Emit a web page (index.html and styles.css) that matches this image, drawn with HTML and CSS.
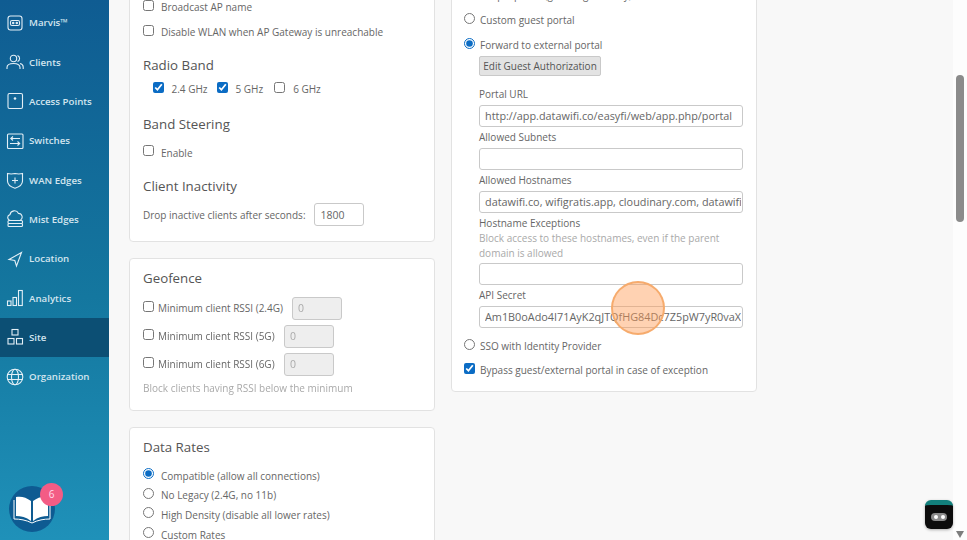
FILE: index.html
```html
<!DOCTYPE html>
<html lang="en">
<head>
<meta charset="utf-8">
<title>WLAN settings</title>
<link rel="stylesheet" href="styles.css">
</head>
<body>
<div class="app">
  <nav class="sidebar">
    <a class="nav-item"><svg class="ico" viewBox="0 0 18 18"><rect x="2" y="2" width="14" height="14" rx="2.5"/><rect x="4.500" y="6.500" width="9" height="5" rx="1.500"/><circle cx="7.200" cy="9" r=".7"/><circle cx="10.800" cy="9" r=".7"/></svg><span>Marvis™</span></a>
    <a class="nav-item"><svg class="ico" viewBox="0 0 18 18"><circle cx="7.500" cy="5.500" r="3.200"/><path d="M1 16v-1.500c0-2.500 2.500-4 6.500-4s6.500 1.500 6.500 4V16"/><path d="M11.500 2.500a3.200 3.200 0 0 1 0 6M14 10.500c2 .5 3.200 1.800 3.200 3.500v2"/></svg><span>Clients</span></a>
    <a class="nav-item"><svg class="ico" viewBox="0 0 18 18"><rect x="2" y="1.500" width="14.500" height="15" rx="1.500"/><circle class="solid" cx="9" cy="6.500" r="1.300"/></svg><span>Access Points</span></a>
    <a class="nav-item"><svg class="ico" viewBox="0 0 18 18"><rect x="1.500" y="2" width="15.500" height="14.500" rx="1"/><path d="M14 6.500H5M7 4.500l-2.200 2 2.200 2M4 11.500h9.500M11.500 9.500l2.200 2-2.200 2"/></svg><span>Switches</span></a>
    <a class="nav-item"><svg class="ico" viewBox="0 0 18 18"><path d="M1.500 2.500c2.500.6 5 .6 7.500 0 2.500.6 5 .6 7.500 0V10c0 3.500-3.500 6-7.500 7.200C5 16 1.500 13.500 1.500 10z"/><path d="M9 6.500v6M6 9.500h6"/></svg><span>WAN Edges</span></a>
    <a class="nav-item"><svg class="ico" viewBox="0 0 18 18"><path d="M4.500 10.500a3 3 0 0 1-.5-5.900 4.500 4.500 0 0 1 8.500-1.200 3.600 3.600 0 0 1 2 6.600"/><rect x="2" y="10.500" width="14.500" height="3" rx="1"/><rect x="2" y="13.500" width="14.500" height="3" rx="1"/></svg><span>Mist Edges</span></a>
    <a class="nav-item"><svg class="ico" viewBox="0 0 18 18"><path d="M15.500 2.500 3 9.500l5.800 1 1.700 5.500z"/></svg><span>Location</span></a>
    <a class="nav-item"><svg class="ico" viewBox="0 0 18 18"><rect x="1.500" y="12" width="3.500" height="4.500"/><rect x="7" y="8.500" width="3.500" height="8"/><rect x="12.500" y="1.500" width="3.800" height="15"/></svg><span>Analytics</span></a>
    <a class="nav-item active"><svg class="ico" viewBox="0 0 18 18"><rect x="6" y="1.500" width="6" height="5.500"/><rect x="2" y="10.500" width="6" height="5.500"/><rect x="10.500" y="10.500" width="6" height="5.500"/></svg><span>Site</span></a>
    <a class="nav-item"><svg class="ico" viewBox="0 0 18 18"><circle cx="9" cy="9" r="7.800"/><ellipse cx="9" cy="9" rx="3.500" ry="7.800"/><path d="M1.500 6.500h15M1.500 11.500h15"/></svg><span>Organization</span></a>
    <div class="book">
      <svg viewBox="0 0 46 46"><circle cx="23" cy="23" r="23" fill="#0e5b92"/><path d="M7 30V11c5-1 10 0 15 4v20c-5-4-10-5-15-5zM39 30V11c-5-1-10 0-15 4v20c5-4 10-5 15-5z" fill="#fff"/><path d="M5 14v19c6 0 12 1 18 4 6-3 12-4 18-4V14" fill="none" stroke="#fff" stroke-width="1"/></svg>
      <b class="badge">6</b>
    </div>
  </nav>

  <main class="content">
    <div class="col col-left">
      <section class="card card-top">
        <label class="row"><input type="checkbox"><span>Broadcast AP name</span></label>
        <label class="row"><input type="checkbox"><span>Disable WLAN when AP Gateway is unreachable</span></label>
        <h3 class="h-radio">Radio Band</h3>
        <div class="bands">
          <label class="band"><input type="checkbox" checked><span>2.4 GHz</span></label>
          <label class="band"><input type="checkbox" checked><span>5 GHz</span></label>
          <label class="band"><input type="checkbox"><span>6 GHz</span></label>
        </div>
        <h3 class="h-steer">Band Steering</h3>
        <label class="row"><input type="checkbox"><span>Enable</span></label>
        <h3 class="h-inact">Client Inactivity</h3>
        <div class="drop"><span>Drop inactive clients after seconds:</span><input class="text num" type="text" value="1800"></div>
      </section>

      <section class="card geo">
        <h3>Geofence</h3>
        <label class="rssi"><input type="checkbox"><span class="w24">Minimum client RSSI (2.4G)</span><input class="text off" type="text" value="0" disabled></label>
        <label class="rssi"><input type="checkbox"><span class="w5">Minimum client RSSI (5G)</span><input class="text off" type="text" value="0" disabled></label>
        <label class="rssi"><input type="checkbox"><span class="w5">Minimum client RSSI (6G)</span><input class="text off" type="text" value="0" disabled></label>
        <p class="help geo-help">Block clients having RSSI below the minimum</p>
      </section>

      <section class="card rates">
        <h3>Data Rates</h3>
        <label class="rate"><input type="radio" name="rate" checked><span>Compatible (allow all connections)</span></label>
        <label class="rate"><input type="radio" name="rate"><span>No Legacy (2.4G, no 11b)</span></label>
        <label class="rate"><input type="radio" name="rate"><span>High Density (disable all lower rates)</span></label>
        <label class="rate"><input type="radio" name="rate"><span>Custom Rates</span></label>
      </section>
    </div>

    <div class="col col-right">
      <section class="card portal">
        <label class="opt"><input type="radio" name="p"><span>Simple portal (guest sign-in only)</span></label>
        <label class="opt"><input type="radio" name="p"><span>Custom guest portal</span></label>
        <label class="opt"><input type="radio" name="p" checked><span>Forward to external portal</span></label>
        <div class="fields">
          <button class="btn" type="button">Edit Guest Authorization</button>
          <label class="flabel first">Portal URL</label>
          <input class="text wide" type="text" value="http://app.datawifi.co/easyfi/web/app.php/portal">
          <label class="flabel">Allowed Subnets</label>
          <input class="text wide" type="text">
          <label class="flabel">Allowed Hostnames</label>
          <input class="text wide" type="text" value="datawifi.co, wifigratis.app, cloudinary.com, datawifi.com">
          <label class="flabel">Hostname Exceptions</label>
          <p class="help">Block access to these hostnames, even if the parent domain is allowed</p>
          <input class="text wide" type="text">
          <label class="flabel">API Secret</label>
          <input class="text wide" type="text" value="Am1B0oAdo4I71AyK2qJTQfHG84Dc7Z5pW7yR0vaXk3Lm">
        </div>
        <label class="opt sso"><input type="radio" name="p"><span>SSO with Identity Provider</span></label>
        <label class="opt"><input type="checkbox" checked><span>Bypass guest/external portal in case of exception</span></label>
        <div class="click"></div>
      </section>
    </div>
  </main>

  <aside class="scroll">
    <div class="thumb"></div>
    <div class="arrow"></div>
    <div class="bot"><i></i><i></i></div>
  </aside>
</div>
</body>
</html>
```

FILE: styles.css
```css
* { box-sizing: border-box; }
html, body { margin: 0; height: 100%; overflow: hidden; }
body {
  font-family: "Open Sans", "Liberation Sans", sans-serif;
  font-size: 10px;
  color: #666;
  background: #f8f8f8;
}
.app { display: flex; width: 967px; height: 540px; overflow: hidden; filter: blur(.3px); }

/* sidebar */
.sidebar {
  position: relative;
  width: 109px;
  flex: none;
  padding-top: 3px;
  background: linear-gradient(180deg, #0f5c92 0%, #14779f 55%, #1f91b9 100%);
}
.nav-item {
  display: flex;
  align-items: center;
  gap: 5px;
  height: 39.35px;
  padding-left: 6px;
  color: #d3e5ef;
  font-weight: 600;
  font-size: 9.7px;
}
.nav-item.active { background: #0c4f74; }
.ico {
  width: 18px;
  height: 18px;
  flex: none;
  fill: none;
  stroke: #e3eff6;
  stroke-width: 1.1;
}
.ico .solid { fill: #e3eff6; stroke: none; }
.book { position: absolute; left: 9px; top: 486px; width: 46px; height: 46px; }
.book svg { width: 46px; height: 46px; display: block; }
.badge {
  position: absolute;
  left: 31px;
  top: -3px;
  width: 23px;
  height: 23px;
  border-radius: 50%;
  background: #f35c85;
  color: #fde;
  font-size: 10px;
  font-weight: 400;
  line-height: 23px;
  text-align: center;
}

/* content */
.content {
  flex: 1;
  display: flex;
  align-items: flex-start;
  gap: 16px;
  padding-left: 20px;
  min-width: 0;
}
.col { flex: none; width: 306px; }
.col-left { margin-top: -19px; }
.col-right { margin-top: -40px; }
.card {
  position: relative;
  background: #fff;
  border: 1px solid #e2e2e2;
  border-radius: 4px;
  padding: 0 13px;
  margin-bottom: 16px;
}
h3 { margin: 0; font-weight: 400; font-size: 13.3px; color: #555; height: 24px; line-height: 24px; }

input[type=checkbox], input[type=radio] {
  width: 11px;
  height: 11px;
  margin: 0;
  flex: none;
  accent-color: #0b6cc4;
  position: relative;
  top: -2px;
}
.card-top { padding-top: 12.5px; padding-bottom: 15px; }
.row { display: flex; align-items: center; gap: 7px; height: 25px; }
.h-radio { margin-top: 8.5px; }
.bands { display: flex; align-items: center; gap: 9px; height: 22px; padding-left: 9.5px; margin-top: 1px; }
.band { display: flex; align-items: center; gap: 8px; }
.band:last-child { margin-left: 2px; }
.h-steer { margin-top: 12px; }
.card-top .h-steer + .row { margin-top: 4px; }
.h-inact { margin-top: 9px; }
.drop { display: flex; align-items: center; gap: 8px; height: 23px; margin-top: 5px; }

.text {
  font: inherit;
  color: #666;
  background: #fff;
  border: 1px solid #c9c9c9;
  border-radius: 3px;
  padding: 0 5px;
  outline: none;
}
.num { width: 50px; height: 23px; font-size: 10.5px; padding-left: 6px; }
.off { width: 50px; height: 23px; background: #eee; color: #aaa; font-size: 10.5px; }

.geo { height: 153px; padding-top: 7px; }
.rssi { display: flex; align-items: center; height: 28.2px; }
.geo h3 + .rssi { margin-top: 4px; }
.w24 { width: 138px; padding-left: 4px; flex: none; }
.w5 { width: 130px; padding-left: 4px; flex: none; }
.help { margin: 0; color: #a9a9a9; line-height: 15px; }
.geo-help { margin-top: 2px; }

.rates { height: 140px; padding-top: 7px; }
.rate { display: flex; align-items: center; gap: 7px; height: 19.6px; }
.rates h3 { margin-bottom: 7px; }

.portal { height: 432px; padding-left: 12px; padding-right: 13px; padding-top: 21.5px; }
.opt { display: flex; align-items: center; gap: 5px; height: 25px; }
.fields { display: flex; flex-direction: column; align-items: flex-start; padding-left: 15px; }
.btn {
  font: inherit;
  color: #555;
  height: 20px;
  width: 122px;
  padding: 0;
  margin-top: -2px;
  background: #e3e3e3;
  border: 1px solid #c9c9c9;
  border-radius: 2px;
}
.flabel { height: 21px; line-height: 21px; }
.flabel.first { margin-top: 8px; }
.wide { width: 264px; height: 22px; font-size: 10.85px; flex: none; padding-left: 5px; padding-right: 1px; }
.fields .help { width: 250px; margin-bottom: 2px; margin-top: -3px; }
.sso { margin-top: 6.5px; height: 24px; }
.sso + .opt { height: 24px; }
.click {
  position: absolute;
  left: 159px;
  top: 319.5px;
  width: 54px;
  height: 54px;
  border-radius: 50%;
  background: rgba(255, 155, 85, .45);
  border: 2px solid rgba(246, 170, 105, .95);
}

/* scrollbar */
.scroll {
  position: relative;
  width: 14px;
  flex: none;
  margin-left: auto;
  background: #fdfdfd;
  display: flex;
  flex-direction: column;
  align-items: center;
  justify-content: space-between;
  padding: 75px 0 2px;
}
.thumb { width: 8px; height: 147px; border-radius: 4px; background: #8b8b8b; }
.arrow { width: 0; height: 0; border: 4px solid transparent; border-top: 7px solid #7d7d7d; border-bottom: 0; }
.bot {
  position: absolute;
  left: -28px;
  top: 500px;
  width: 28px;
  height: 29px;
  border-radius: 6px;
  border-top: 5px solid #12807c;
  background: #0c0c0c;
  display: flex;
  align-items: center;
  justify-content: center;
  gap: 2px;
  box-shadow: 0 1px 3px rgba(0,0,0,.3);
}
.bot i { width: 9px; height: 8px; background: #8a8a8a; position: relative; }
.bot i:first-child { border-radius: 4px 0 0 4px; margin-right: -2px; }
.bot i:last-child { border-radius: 0 4px 4px 0; margin-left: -2px; }
.bot i::after {
  content: "";
  position: absolute;
  left: 2.5px;
  top: 2px;
  width: 4px;
  height: 4px;
  border-radius: 50%;
  background: #fff;
}
```
